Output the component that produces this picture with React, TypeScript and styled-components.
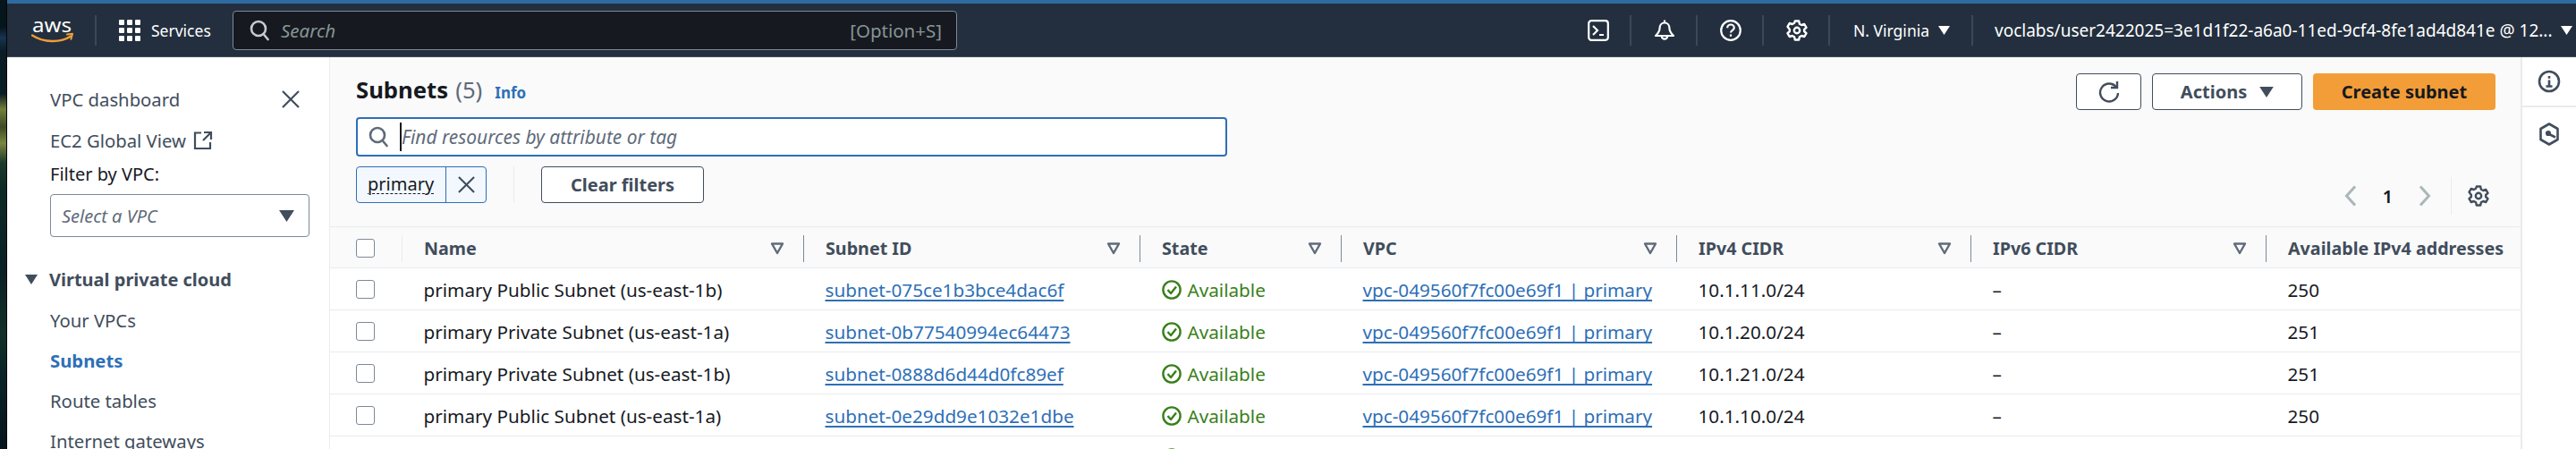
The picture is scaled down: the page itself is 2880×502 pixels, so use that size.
import React from "react";
import styled, { createGlobalStyle } from "styled-components";

const FONT = `"Noto Sans", "Open Sans", sans-serif`;

const GlobalStyle = createGlobalStyle`
  html, body {
    margin: 0;
    padding: 0;
    background: #fff;
  }
  * { box-sizing: border-box; }
`;

type Subnet = { name: string; id: string; cidr: string; free: number };

const SUBNETS: Subnet[] = [
  { name: "primary Public Subnet (us-east-1b)", id: "subnet-075ce1b3bce4dac6f", cidr: "10.1.11.0/24", free: 250 },
  { name: "primary Private Subnet (us-east-1a)", id: "subnet-0b77540994ec64473", cidr: "10.1.20.0/24", free: 251 },
  { name: "primary Private Subnet (us-east-1b)", id: "subnet-0888d6d44d0fc89ef", cidr: "10.1.21.0/24", free: 251 },
  { name: "primary Public Subnet (us-east-1a)", id: "subnet-0e29dd9e1032e1dbe", cidr: "10.1.10.0/24", free: 250 },
];

const COLUMNS = "80px 449px 376px 225px 375px 329px 330px 285px";

const Gear = ({ size = 24, color = "#fff" }: { size?: number; color?: string }) => (
  <svg width={size} height={size} viewBox="0 0 24 24" fill="none" stroke={color} strokeWidth="2.4" strokeLinejoin="round">
    <path d="M9.8 1.5h4.4l.7 3.2 2.3 1.3 3.1-1 2.2 3.8-2.4 2.2v2l2.4 2.2-2.2 3.8-3.1-1-2.3 1.3-.7 3.2H9.8l-.7-3.2-2.3-1.3-3.1 1-2.2-3.8 2.4-2.2v-2L1.5 7.8l2.2-3.8 3.1 1 2.3-1.3z" />
    <circle cx="12" cy="12" r="3.2" />
  </svg>
);

const SearchGlass = ({ color }: { color: string }) => (
  <svg width="22" height="24" viewBox="0 0 22 24" fill="none" stroke={color} strokeWidth="2.6" strokeLinecap="round">
    <circle cx="10" cy="10" r="8" />
    <path d="M15.5 16l5 6" />
  </svg>
);

const Cross = ({ size, color }: { size: number; color: string }) => (
  <svg width={size} height={size} viewBox="0 0 20 20" fill="none" stroke={color} strokeWidth="2.2">
    <path d="M1 1l18 18M19 1L1 19" />
  </svg>
);

const Caret = ({ w = 13, h = 10, color = "#fff" }: { w?: number; h?: number; color?: string }) => (
  <svg width={w} height={h} viewBox="0 0 13 10">
    <path d="M0 0h13L6.5 10z" fill={color} />
  </svg>
);

const FilterCaret = () => (
  <svg width="16" height="14" viewBox="0 0 16 14" fill="none" stroke="#5f6b7a" strokeWidth="2.4" strokeLinejoin="round">
    <path d="M2 1.5h12L8 12z" />
  </svg>
);

const AwsLogo = () => (
  <svg width="48" height="42" viewBox="0 0 48 42">
    <text x="1" y="23" fontFamily={FONT} fontSize="21" fill="#fff" textLength="44" lengthAdjust="spacingAndGlyphs">aws</text>
    <g transform="translate(0 6)">
      <path d="M1 20.5c13 8.500 32 8.500 43 1" fill="none" stroke="#f29d38" strokeWidth="2.4" strokeLinecap="round" />
      <path d="M40 19.500l6-.8-1.600 6" fill="none" stroke="#f29d38" strokeWidth="2" strokeLinecap="round" strokeLinejoin="round" />
    </g>
  </svg>
);

const AvailableIcon = () => (
  <svg width="22" height="24" viewBox="0 0 22 24" fill="none" stroke="#387f1a" strokeWidth="2.4">
    <circle cx="11" cy="12" r="9.600" />
    <path d="M6.500 12l3.500 4 6-7.500" strokeLinejoin="round" />
  </svg>
);

const Chevron = ({ d }: { d: string }) => (
  <svg width="14" height="24" viewBox="0 0 14 24" fill="none" stroke="#aab7b8" strokeWidth="3">
    <path d={d} />
  </svg>
);

const App = () => (
  <Page>
    <GlobalStyle />
    <Wallpaper />
    <Shell>
      <TopBar>
        <LogoBox>
          <AwsLogo />
        </LogoBox>
        <ServicesBox>
          <GridDots>
            {Array.from({ length: 9 }).map((_, i) => (
              <i key={i} />
            ))}
          </GridDots>
          <NavText>Services</NavText>
        </ServicesBox>
        <GlobalSearch>
          <SearchGlass color="#c6cacd" />
          <SearchHint>Search</SearchHint>
          <Shortcut>[Option+S]</Shortcut>
        </GlobalSearch>
        <NavIcons>
          <NavIcon>
            <svg width="24" height="24" viewBox="0 0 24 24" fill="none" stroke="#fff" strokeWidth="2.2">
              <rect x="1.200" y="1.200" width="21.600" height="21.600" rx="3" />
              <path d="M6 7l5 5-5 5M13 17h5" />
            </svg>
          </NavIcon>
          <NavIcon>
            <svg width="24" height="24" viewBox="0 0 24 24" fill="none" stroke="#fff" strokeWidth="2.2" strokeLinejoin="round">
              <path d="M12 .5v3M12 3.500c-3.500 0-5.500 2.800-5.500 6.500 0 3-1.500 5-4.500 8h20c-3-3-4.500-5-4.500-8 0-3.700-2-6.500-5.500-6.500z" />
              <path d="M8.800 18.500a3.200 3.200 0 0 0 6.400 0" />
            </svg>
          </NavIcon>
          <NavIcon>
            <svg width="24" height="24" viewBox="0 0 24 24" fill="none" stroke="#fff" strokeWidth="2.2">
              <circle cx="12" cy="12" r="10.800" />
              <path d="M8.200 9.200c0-2.200 1.700-3.700 3.800-3.700s3.800 1.500 3.800 3.500c0 2.800-3.800 2.800-3.800 5.500" />
              <path d="M12 16.400v2.400" />
            </svg>
          </NavIcon>
          <NavIcon>
            <Gear />
          </NavIcon>
        </NavIcons>
        <RegionBox>
          <NavText>N. Virginia</NavText>
          <Caret />
        </RegionBox>
        <UserBox>
          <UserText>voclabs/user2422025=3e1d1f22-a6a0-11ed-9cf4-8fe1ad4d841e @ 12...</UserText>
          <Caret />
        </UserBox>
      </TopBar>

      <Body>
        <SideNav>
          <SideTop>
            <SideLink>VPC dashboard</SideLink>
            <Cross size={20} color="#414d5c" />
          </SideTop>
          <SideExternal>
            <SideLink>EC2 Global View</SideLink>
            <svg width="22" height="22" viewBox="0 0 22 22" fill="none" stroke="#414d5c" strokeWidth="2.2">
              <path d="M9 2.500H2v17.500h17v-7M12 2h8v8M20 2l-9 9" />
            </svg>
          </SideExternal>
          <FilterLabel>Filter by VPC:</FilterLabel>
          <VpcSelect>
            <SelectHint>Select a VPC</SelectHint>
            <Caret w={17} h={13} color="#414d5c" />
          </VpcSelect>
          <SectionHead>
            <Caret w={14} h={11} color="#414d5c" />
            <SectionTitle>Virtual private cloud</SectionTitle>
          </SectionHead>
          <SideList>
            <SideLink>Your VPCs</SideLink>
            <SideLink $active>Subnets</SideLink>
            <SideLink>Route tables</SideLink>
            <SideLink>Internet gateways</SideLink>
          </SideList>
        </SideNav>

        <Main>
          <Toolbar>
            <ToolbarLeft>
              <TitleLine>
                <Title>Subnets</Title>
                <Count>(5)</Count>
                <InfoLink>Info</InfoLink>
              </TitleLine>
              <FilterInput>
                <SearchGlass color="#5f6b7a" />
                <Cursor />
                <FilterHint>Find resources by attribute or tag</FilterHint>
              </FilterInput>
              <TokenRow>
                <Token>
                  <TokenText>primary</TokenText>
                  <TokenClose>
                    <Cross size={19} color="#414d5c" />
                  </TokenClose>
                </Token>
                <TokenDivider />
                <ClearButton>Clear filters</ClearButton>
              </TokenRow>
            </ToolbarLeft>
            <ToolbarRight>
              <Actions>
                <OutlineButton $width={73}>
                  <svg width="24" height="26" viewBox="0 0 24 26" fill="none" stroke="#414d5c" strokeWidth="2.4">
                    <path d="M20 7.500A10 10 0 1 0 22 14" />
                    <path d="M21 1v7h-7" />
                  </svg>
                </OutlineButton>
                <OutlineButton $width={168}>
                  Actions
                  <Caret w={16} h={12} color="#414d5c" />
                </OutlineButton>
                <PrimaryButton>Create subnet</PrimaryButton>
              </Actions>
              <Pager>
                <Chevron d="M12 1.500L2.500 12l9.500 10.500" />
                <PageNumber>1</PageNumber>
                <Chevron d="M2 1.500L11.500 12 2 22.500" />
                <PagerSettings>
                  <Gear color="#414d5c" />
                </PagerSettings>
              </Pager>
            </ToolbarRight>
          </Toolbar>

          <HeaderRow>
            <CheckCell>
              <CheckBox />
            </CheckCell>
            {["Name", "Subnet ID", "State", "VPC", "IPv4 CIDR", "IPv6 CIDR"].map((label) => (
              <HeadCell key={label} $faint={label === "Name"}>
                <span>{label}</span>
                <FilterCaret />
              </HeadCell>
            ))}
            <LastHead>Available IPv4 addresses</LastHead>
          </HeaderRow>

          {SUBNETS.map((s) => (
            <Row key={s.id}>
              <CheckCell>
                <CheckBox />
              </CheckCell>
              <Cell>{s.name}</Cell>
              <Cell>
                <LinkText>{s.id}</LinkText>
              </Cell>
              <Cell>
                <StatusText>
                  <AvailableIcon />
                  Available
                </StatusText>
              </Cell>
              <Cell>
                <LinkText>vpc-049560f7fc00e69f1 | primary</LinkText>
              </Cell>
              <Cell>{s.cidr}</Cell>
              <Cell>–</Cell>
              <Cell>{s.free}</Cell>
            </Row>
          ))}
          <Row>
            <CheckCell />
            <Cell />
            <Cell />
            <Cell>
              <StatusText>
                <AvailableIcon />
              </StatusText>
            </Cell>
          </Row>
        </Main>

        <Rail>
          <RailSlot $divider>
            <svg width="26" height="26" viewBox="0 0 26 26" fill="none" stroke="#414d5c" strokeWidth="2.6">
              <circle cx="13" cy="13" r="11" />
              <path d="M13 11.500v7M13 7v2.800M9.500 18.500h7" />
            </svg>
          </RailSlot>
          <RailSlot>
            <svg width="24" height="26" viewBox="0 0 24 26" fill="none" stroke="#414d5c" strokeWidth="2.6" strokeLinejoin="round">
              <path d="M12 1.500l9.500 5.500v12L12 24.500 2.500 19V7z" />
              <circle cx="11" cy="12" r="1.800" fill="#414d5c" />
              <path d="M12 13l7 3.500" />
            </svg>
          </RailSlot>
        </Rail>
      </Body>
    </Shell>
  </Page>
);

export default App;

const Page = styled.div`
  width: 2880px;
  height: 502px;
  display: flex;
  overflow: hidden;
  font-family: ${FONT};
  font-size: 20px;
  color: #16191f;
  background: #fff;
`;

const Wallpaper = styled.div`
  width: 8px;
  flex: none;
  border-right: 1px solid #020608;
  background: linear-gradient(
    180deg,
    #06141c 0,
    #06141c 30px,
    #17334f 42px,
    #0a1c24 58px,
    #0a1c24 105px,
    #747f3b 122px,
    #3d4a24 142px,
    #7b8640 160px,
    #1d3a2a 182px,
    #0d2a26 210px,
    #0a2024 300px,
    #123029 375px,
    #0a2326 420px,
    #06141c 502px
  );
`;

const Shell = styled.div`
  flex: 1;
  min-width: 0;
`;

const TopBar = styled.header`
  height: 64px;
  display: flex;
  align-items: center;
  padding-left: 27px;
  background: #232f3e;
  border-top: 4px solid #2f6ba1;
  border-bottom: 1px solid #414d5c;
`;

const LogoBox = styled.div`
  width: 73px;
  height: 34px;
  display: flex;
  align-items: center;
  border-right: 2px solid #3b4857;
`;

const ServicesBox = styled.div`
  display: flex;
  align-items: center;
  margin-left: 25px;
  width: 127px;
  gap: 12px;
`;

const GridDots = styled.div`
  width: 24px;
  display: grid;
  grid-template-columns: repeat(3, 6px);
  grid-auto-rows: 6px;
  gap: 3px;
  i {
    background: #fff;
    border-radius: 1px;
  }
`;

const NavText = styled.span`
  font-size: 17.5px;
  color: #fff;
  white-space: nowrap;
`;

const UserText = styled(NavText)`
  font-size: 19px;
`;

const GlobalSearch = styled.div`
  width: 810px;
  height: 44px;
  display: flex;
  align-items: center;
  padding: 0 16px 0 18px;
  background: #16191f;
  border: 1px solid #7d8998;
  border-radius: 4px;
`;

const SearchHint = styled.span`
  margin-left: 13px;
  font-size: 20.5px;
  font-style: italic;
  color: #879596;
`;

const Shortcut = styled.span`
  margin-left: auto;
  font-size: 20.5px;
  color: #879596;
`;

const NavIcons = styled.div`
  display: flex;
  margin-left: 680px;
`;

const NavIcon = styled.div`
  width: 74px;
  height: 34px;
  padding-left: 2px;
  display: flex;
  align-items: center;
  justify-content: center;
  border-right: 2px solid #3b4857;
`;

const RegionBox = styled.div`
  width: 160px;
  height: 34px;
  display: flex;
  align-items: center;
  gap: 10px;
  padding-left: 26px;
  border-right: 2px solid #3b4857;
`;

const UserBox = styled.div`
  display: flex;
  align-items: center;
  gap: 9px;
  padding-left: 24px;
`;

const Body = styled.div`
  display: flex;
  height: 438px;
`;

const SideNav = styled.nav`
  width: 361px;
  flex: none;
  padding: 35px 22px 0 48px;
  background: #fff;
  border-right: 1px solid #e9ebed;
`;

const SideTop = styled.div`
  display: flex;
  align-items: center;
  justify-content: space-between;
  padding-right: 11px;
  height: 24px;
`;

const SideExternal = styled.div`
  display: flex;
  align-items: center;
  gap: 8px;
  height: 24px;
  margin-top: 22px;
`;

const SideLink = styled.span<{ $active?: boolean }>`
  font-size: 20.3px;
  line-height: 24px;
  color: ${({ $active }) => ($active ? "#2e6fb7" : "#414d5c")};
  font-weight: ${({ $active }) => ($active ? 700 : 400)};
`;

const FilterLabel = styled.div`
  margin-top: 14px;
  font-size: 20px;
  line-height: 24px;
  color: #16191f;
`;

const VpcSelect = styled.div`
  width: 290px;
  height: 48px;
  margin-top: 10px;
  padding: 0 16px 0 12px;
  display: flex;
  align-items: center;
  justify-content: space-between;
  background: #fff;
  border: 1px solid #7d8998;
  border-radius: 4px;
`;

const SelectHint = styled.span`
  font-size: 20px;
  font-style: italic;
  color: #5f6b7a;
`;

const SectionHead = styled.div`
  display: flex;
  align-items: center;
  gap: 13px;
  margin: 35px 0 0 -28px;
  height: 24px;
`;

const SectionTitle = styled.span`
  font-size: 20px;
  font-weight: 700;
  color: #414d5c;
`;

const SideList = styled.div`
  display: flex;
  flex-direction: column;
  gap: 21px;
  margin-top: 22px;
`;

const Main = styled.main`
  width: 2449px;
  flex: none;
  background: #fafafa;
`;

const Toolbar = styled.div`
  height: 190px;
  display: flex;
  justify-content: space-between;
  padding: 18px 28px 0 29px;
  border-bottom: 1px solid #e9ebed;
`;

const ToolbarLeft = styled.div`
  width: 974px;
`;

const TitleLine = styled.div`
  height: 36px;
  margin-top: 1px;
  display: flex;
  align-items: baseline;
`;

const Title = styled.h1`
  margin: 0;
  font-size: 25.7px;
  font-weight: 700;
`;

const Count = styled.span`
  margin-left: 8px;
  font-size: 25.7px;
  color: #5f6b7a;
`;

const InfoLink = styled.span`
  margin-left: 14px;
  font-size: 17px;
  font-weight: 700;
  color: #2e6fb7;
`;

const FilterInput = styled.div`
  height: 44px;
  margin-top: 12px;
  display: flex;
  align-items: center;
  padding-left: 12px;
  background: #fff;
  border: 2px solid #2e6fb7;
  border-radius: 4px;
`;

const Cursor = styled.span`
  width: 2px;
  height: 32px;
  margin-left: 13px;
  background: #16191f;
`;

const FilterHint = styled.span`
  font-size: 20.9px;
  font-style: italic;
  color: #5f6b7a;
`;

const TokenRow = styled.div`
  display: flex;
  align-items: center;
  margin-top: 11px;
`;

const Token = styled.div`
  width: 146px;
  height: 41px;
  display: flex;
  background: #f2f8fd;
  border: 1px solid #2e6fb7;
  border-radius: 4px;
`;

const TokenText = styled.span`
  width: 100px;
  padding-left: 12px;
  font-size: 20px;
  line-height: 38px;
  color: #16191f;
  white-space: nowrap;
  text-decoration: underline dashed 1px;
  text-underline-offset: 3px;
  border-right: 1px solid #2e6fb7;
`;

const TokenClose = styled.div`
  flex: 1;
  display: flex;
  align-items: center;
  justify-content: center;
`;

const TokenDivider = styled.span`
  width: 1px;
  height: 41px;
  margin: 0 30px;
  background: #e9ebed;
`;

const ClearButton = styled.button`
  width: 182px;
  height: 41px;
  padding: 0;
  font-family: ${FONT};
  font-size: 20px;
  font-weight: 700;
  color: #414d5c;
  background: #fff;
  border: 1px solid #414d5c;
  border-radius: 4px;
`;

const ToolbarRight = styled.div`
  display: flex;
  flex-direction: column;
  align-items: flex-end;
`;

const Actions = styled.div`
  display: flex;
  gap: 12px;
`;

const OutlineButton = styled.button<{ $width: number }>`
  width: ${({ $width }) => $width}px;
  height: 41px;
  padding: 0;
  display: flex;
  align-items: center;
  justify-content: center;
  gap: 14px;
  font-family: ${FONT};
  font-size: 20px;
  font-weight: 700;
  color: #414d5c;
  background: #fff;
  border: 1px solid #414d5c;
  border-radius: 4px;
`;

const PrimaryButton = styled.button`
  width: 204px;
  height: 41px;
  padding: 0;
  font-family: ${FONT};
  font-size: 20px;
  font-weight: 700;
  color: #16191f;
  background: #f29d38;
  border: none;
  border-radius: 4px;
`;

const Pager = styled.div`
  display: flex;
  align-items: center;
  margin-top: 75px;
  height: 42px;
`;

const PageNumber = styled.span`
  width: 69px;
  text-align: center;
  font-size: 20px;
  font-weight: 600;
`;

const PagerSettings = styled.div`
  height: 42px;
  margin-left: 22px;
  padding: 0 7px 0 18px;
  display: flex;
  align-items: center;
  border-left: 1px solid #e9ebed;
`;

const HeaderRow = styled.div`
  height: 46px;
  padding-top: 2px;
  display: grid;
  grid-template-columns: ${COLUMNS};
  align-items: center;
  background: #fafafa;
  border-bottom: 1px solid #e9ebed;
`;

const Row = styled.div`
  height: 47px;
  display: grid;
  grid-template-columns: ${COLUMNS};
  align-items: center;
  background: #fff;
  border-bottom: 1px solid #e9ebed;
`;

const CheckCell = styled.div`
  padding-left: 29px;
  height: 30px;
  display: flex;
  align-items: center;
`;

const CheckBox = styled.span`
  width: 21px;
  height: 21px;
  background: #fff;
  border: 1.5px solid #7d8998;
  border-radius: 3px;
`;

const HeadCell = styled.div<{ $faint?: boolean }>`
  height: 30px;
  display: flex;
  align-items: center;
  justify-content: space-between;
  padding: 0 21px 0 24px;
  font-size: 19.7px;
  font-weight: 700;
  color: #414d5c;
  white-space: nowrap;
  border-left: 1px solid ${({ $faint }) => ($faint ? "#e9ebed" : "#7d8998")};
`;

const LastHead = styled(HeadCell)`
  padding-right: 0;
`;

const Cell = styled.div`
  padding: 2px 0 0 24.5px;
  font-size: 20.7px;
  white-space: nowrap;
`;

const LinkText = styled.span`
  color: #2e6fb7;
  text-decoration: underline 1.5px;
  text-decoration-skip-ink: none;
  text-underline-offset: 3px;
`;

const StatusText = styled.span`
  display: flex;
  align-items: center;
  gap: 7px;
  color: #387f1a;
`;

const Rail = styled.aside`
  flex: 1;
  background: #fff;
  border-left: 2px solid #e9ebed;
`;

const RailSlot = styled.div<{ $divider?: boolean }>`
  height: 56px;
  display: flex;
  align-items: center;
  justify-content: center;
  padding-top: ${({ $divider }) => ($divider ? 0 : 4)}px;
  border-bottom: ${({ $divider }) => ($divider ? "2px solid #e9ebed" : "none")};
`;
